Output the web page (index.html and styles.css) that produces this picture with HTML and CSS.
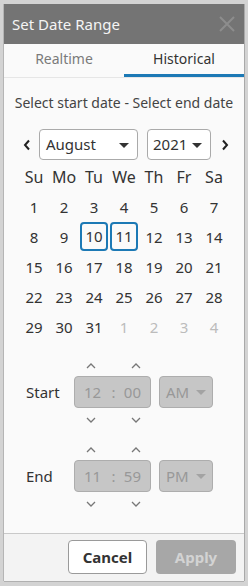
FILE: index.html
```html
<!DOCTYPE html>
<html lang="en">

<head>
    <meta charset="UTF-8" />
    <meta name="viewport" content="width=device-width, initial-scale=1.0" />
    <title>Set Date Range</title>
    <link rel="stylesheet" href="styles.css">
</head>

<body>
    <div class="dialog">
        <div class="header">
            <span class="title">Set Date Range</span>
            <svg class="close" width="16" height="16" viewBox="0 0 16 16">
                <path d="M1 1L15 15M15 1L1 15" stroke="#8d8d8d" stroke-width="2" fill="none" />
            </svg>
        </div>
        <div class="tabs">
            <div class="tab">Realtime</div>
            <div class="tab active">Historical</div>
        </div>
        <div class="content">
            <p class="hint">Select start date - Select end date</p>
            <div class="month-row">
                <svg class="arrow" width="8" height="12" viewBox="0 0 8 12">
                    <path d="M6 1.5L2 6L6 10.5" stroke="#222" stroke-width="2" fill="none" />
                </svg>
                <div class="select month">August<span class="caret"></span></div>
                <div class="select year">2021<span class="caret"></span></div>
                <svg class="arrow" width="8" height="12" viewBox="0 0 8 12">
                    <path d="M2 1.5L6 6L2 10.5" stroke="#222" stroke-width="2" fill="none" />
                </svg>
            </div>
            <div class="calendar">
                <div class="dow">Su</div><div class="dow">Mo</div><div class="dow">Tu</div><div class="dow">We</div><div class="dow">Th</div><div class="dow">Fr</div><div class="dow">Sa</div>
                <div class="day">1</div><div class="day">2</div><div class="day">3</div><div class="day">4</div><div class="day">5</div><div class="day">6</div><div class="day">7</div>
                <div class="day">8</div><div class="day">9</div><div class="day selected">10</div><div class="day selected">11</div><div class="day">12</div><div class="day">13</div><div class="day">14</div>
                <div class="day">15</div><div class="day">16</div><div class="day">17</div><div class="day">18</div><div class="day">19</div><div class="day">20</div><div class="day">21</div>
                <div class="day">22</div><div class="day">23</div><div class="day">24</div><div class="day">25</div><div class="day">26</div><div class="day">27</div><div class="day">28</div>
                <div class="day">29</div><div class="day">30</div><div class="day">31</div><div class="day other">1</div><div class="day other">2</div><div class="day other">3</div><div class="day other">4</div>
            </div>

            <div class="time-block start-block">
                <div class="spin-row">
                    <svg class="spin" width="10" height="6" viewBox="0 0 10 6"><path d="M1 5L5 1L9 5" /></svg>
                    <svg class="spin" width="10" height="6" viewBox="0 0 10 6"><path d="M1 5L5 1L9 5" /></svg>
                </div>
                <div class="time-row">
                    <span class="label">Start</span>
                    <div class="time-box"><span>12</span><span class="colon">:</span><span>00</span></div>
                    <div class="ampm">AM<span class="caret"></span></div>
                </div>
                <div class="spin-row down">
                    <svg class="spin" width="10" height="6" viewBox="0 0 10 6"><path d="M1 1L5 5L9 1" /></svg>
                    <svg class="spin" width="10" height="6" viewBox="0 0 10 6"><path d="M1 1L5 5L9 1" /></svg>
                </div>
            </div>

            <div class="time-block end-block">
                <div class="spin-row">
                    <svg class="spin" width="10" height="6" viewBox="0 0 10 6"><path d="M1 5L5 1L9 5" /></svg>
                    <svg class="spin" width="10" height="6" viewBox="0 0 10 6"><path d="M1 5L5 1L9 5" /></svg>
                </div>
                <div class="time-row">
                    <span class="label">End</span>
                    <div class="time-box"><span>11</span><span class="colon">:</span><span>59</span></div>
                    <div class="ampm">PM<span class="caret"></span></div>
                </div>
                <div class="spin-row down">
                    <svg class="spin" width="10" height="6" viewBox="0 0 10 6"><path d="M1 1L5 5L9 1" /></svg>
                    <svg class="spin" width="10" height="6" viewBox="0 0 10 6"><path d="M1 1L5 5L9 1" /></svg>
                </div>
            </div>
        </div>
        <div class="footer">
            <button class="btn cancel">Cancel</button>
            <button class="btn apply" disabled>Apply</button>
        </div>
    </div>
</body>

</html>
```

FILE: styles.css
```css
body {
    margin: 0;
    height: 586px;
    background-color: #d3d3d3;
    font-family: "Noto Sans", "Open Sans", sans-serif;
    overflow: hidden;
}

.dialog {
    width: 240px;
    height: 577px;
    margin: 4px 0 0 4px;
    background-color: #fafafa;
    box-shadow: -1px 0 0 #b5b5b5, 1px 0 0 #a9a9a9, 0 1px 0 #b0b0b0;
    display: flex;
    flex-direction: column;
}

.header {
    height: 40px;
    background-color: #747474;
    display: flex;
    align-items: center;
    justify-content: space-between;
    padding: 0 9px 0 8px;
}

.title {
    color: #f4f4f4;
    font-size: 15px;
}

.tabs {
    display: flex;
    height: 33px;
    border-bottom: 1px solid #e6e6e6;
}

.tab {
    flex: 1;
    text-align: center;
    font-size: 14px;
    line-height: 30px;
    color: #7a7a7a;
    border-bottom: 3px solid transparent;
}

.tab.active {
    color: #333;
    border-bottom-color: #1c79b5;
}

.content {
    flex: 1;
}

.hint {
    margin: 15px 0 0;
    text-align: center;
    font-size: 14px;
    line-height: 20px;
    color: #444;
}

.month-row {
    display: flex;
    align-items: center;
    height: 31px;
    margin-top: 16px;
    padding-left: 19px;
}

.arrow {
    margin-right: 8px;
}

.month-row .arrow:last-child {
    margin-left: 10px;
    margin-right: 0;
}

.select {
    position: relative;
    height: 29px;
    border: 1px solid #aaa;
    border-radius: 4px;
    background-color: #fff;
    font-size: 15px;
    line-height: 29px;
    color: #333;
    padding-left: 6px;
    box-sizing: content-box;
}

.month {
    width: 91px;
}

.year {
    width: 57px;
    margin-left: 9px;
    padding-left: 5px;
}

.caret {
    position: absolute;
    right: 8px;
    top: 13px;
    width: 0;
    height: 0;
    border-left: 5px solid transparent;
    border-right: 5px solid transparent;
    border-top: 5px solid #333;
}

.calendar {
    display: grid;
    grid-template-columns: repeat(7, 30px);
    grid-auto-rows: 30px;
    width: 210px;
    margin: 2px auto 0;
}

.dow {
    text-align: center;
    line-height: 30px;
    font-size: 16px;
    color: #333;
}

.day {
    text-align: center;
    line-height: 30px;
    font-size: 15px;
    color: #333;
}

.day.selected {
    margin: 0 1px 1px;
    line-height: 25px;
    border: 2px solid #1c79b5;
    border-radius: 4px;
}

.day.other {
    color: #bcbcbc;
}

.time-block {
    margin-left: 66px;
}

.start-block {
    margin-top: 21px;
}

.end-block {
    margin-top: 24px;
}

.spin-row {
    display: flex;
    height: 6px;
    padding-left: 16px;
    gap: 35px;
}

.spin {
    fill: none;
    stroke: #777;
    stroke-width: 1.3;
}

.time-row {
    display: flex;
    align-items: center;
    height: 32px;
    margin: 7px 0 0 -44px;
}

.spin-row.down {
    margin-top: 9px;
}

.label {
    width: 48px;
    font-size: 15px;
    color: #333;
}

.time-box,
.ampm {
    border: 1px solid #adadad;
    border-radius: 4px;
    background-color: #c6c6c6;
    color: #989898;
    font-size: 15px;
    line-height: 30px;
    box-sizing: border-box;
    height: 32px;
}

.time-box {
    display: flex;
    justify-content: space-between;
    padding: 0 9px;
    width: 77px;
}

.colon {
    margin-left: 2px;
}

.ampm {
    position: relative;
    margin-left: 8px;
    padding-left: 6px;
    width: 54px;
}

.ampm .caret {
    border-top-color: #a3a3a3;
    right: 6px;
}

.footer {
    height: 48px;
    border-top: 1px solid #c9c9c9;
    background-color: #f3f3f3;
    display: flex;
    justify-content: flex-end;
    align-items: flex-start;
    padding: 6px 8px 0 0;
    box-sizing: border-box;
    gap: 9px;
}

.btn {
    height: 34px;
    border-radius: 4px;
    font-family: "Noto Sans", "Open Sans", sans-serif;
    font-size: 15px;
    font-weight: bold;
}

.cancel {
    width: 79px;
    border: 1px solid #9a9a9a;
    background-color: #fff;
    color: #333;
}

.apply {
    width: 80px;
    border: none;
    background-color: #a7a7a7;
    color: #d3d3d3;
}
```
